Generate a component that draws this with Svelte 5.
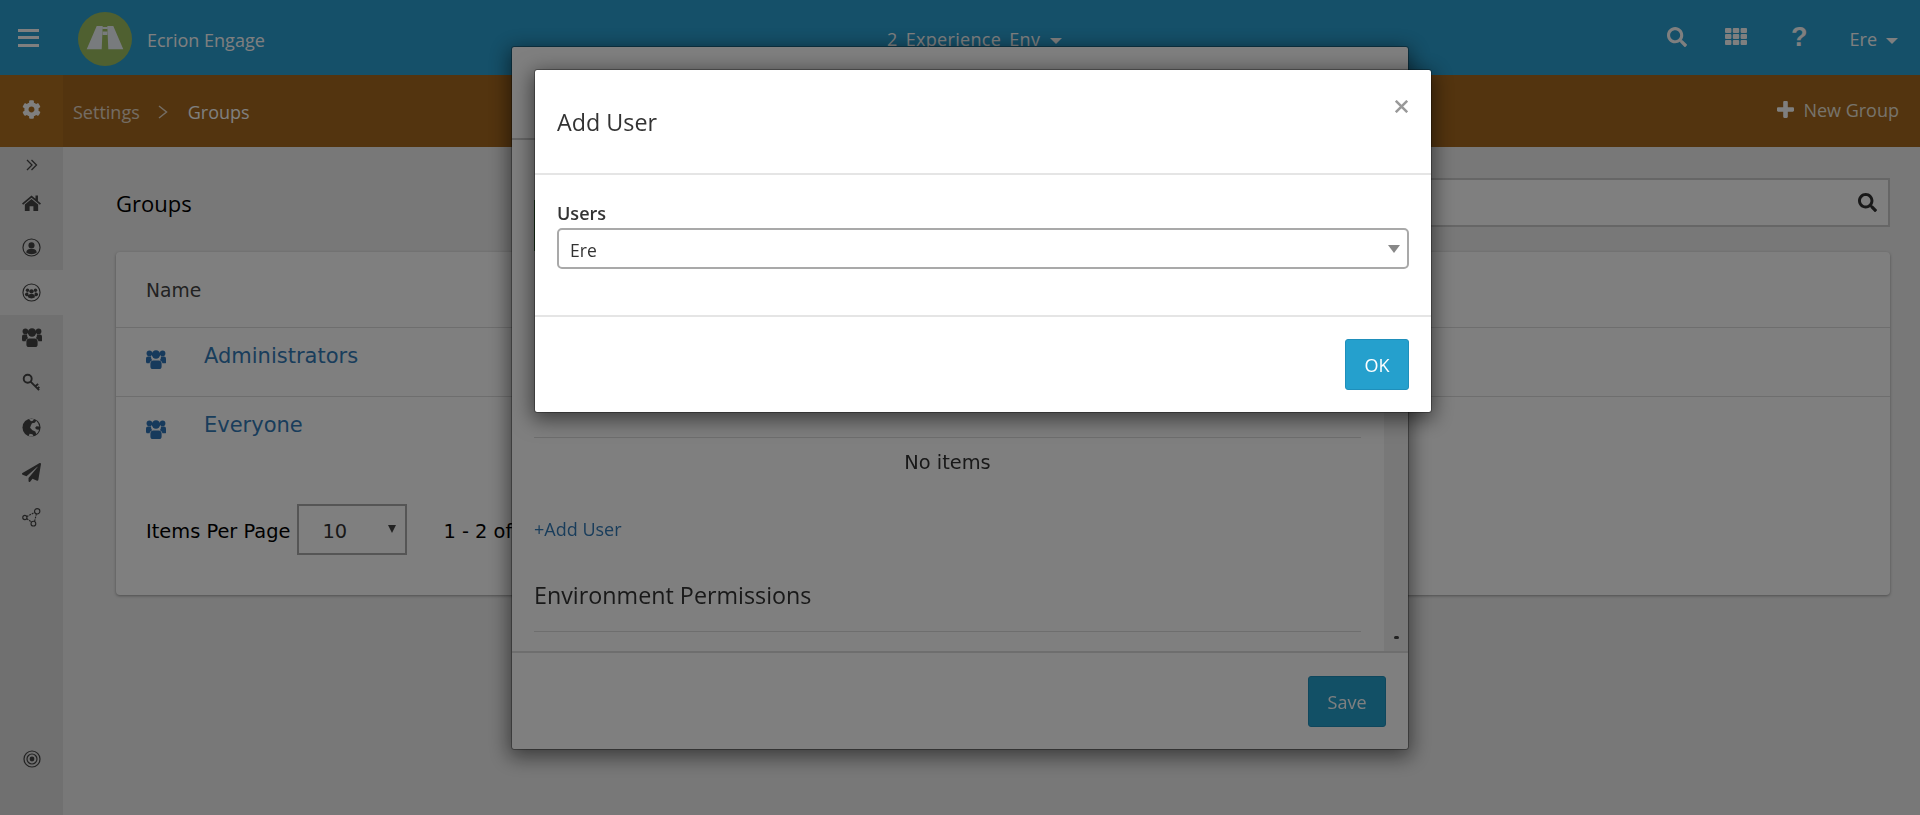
<script>
  const navIcons = ['home', 'user', 'team', 'users', 'key', 'globe', 'plane', 'share'];
  const groups = ['Administrators', 'Everyone'];
  const searchPath =
    'M505 442.7L405.3 343c-4.5-4.5-10.6-7-17-7H372c27.6-35.3 44-79.7 44-128C416 93.1 322.9 0 208 0S0 93.1 0 208s93.1 208 208 208c48.3 0 92.7-16.4 128-44v16.3c0 6.4 2.5 12.5 7 17l99.7 99.7c9.4 9.4 24.6 9.4 33.9 0l28.3-28.3c9.4-9.4 9.4-24.6.1-34zM208 336c-70.7 0-128-57.2-128-128 0-70.7 57.2-128 128-128 70.7 0 128 57.2 128 128 0 70.7-57.2 128-128 128z';
  const cogPath =
    'M487.4 315.7l-42.6-24.6c4.3-23.2 4.3-47 0-70.2l42.6-24.6c4.9-2.8 7.1-8.6 5.5-14-11.1-35.6-30-67.8-54.7-94.6-3.8-4.1-10-5.1-14.8-2.3L380.8 110c-17.9-15.4-38.5-27.3-60.8-35.1V25.8c0-5.6-3.9-10.5-9.4-11.7-36.7-8.2-74.3-7.8-109.2 0-5.5 1.2-9.4 6.1-9.4 11.7V75c-22.2 7.9-42.8 19.8-60.8 35.1L88.7 85.5c-4.9-2.8-11-1.9-14.8 2.3-24.7 26.7-43.6 58.9-54.7 94.6-1.7 5.4.6 11.2 5.5 14L67.3 221c-4.3 23.2-4.3 47 0 70.2l-42.6 24.6c-4.9 2.8-7.1 8.6-5.5 14 11.1 35.6 30 67.8 54.7 94.6 3.8 4.1 10 5.1 14.8 2.3l42.6-24.6c17.9 15.4 38.5 27.3 60.8 35.1v49.2c0 5.6 3.9 10.5 9.4 11.7 36.7 8.2 74.3 7.8 109.2 0 5.5-1.2 9.4-6.1 9.4-11.7v-49.2c22.2-7.9 42.8-19.8 60.8-35.1l42.6 24.6c4.9 2.8 11 1.9 14.8-2.3 24.7-26.7 43.6-58.9 54.7-94.6 1.5-5.5-.7-11.3-5.6-14.1zM256 336c-44.1 0-80-35.9-80-80s35.9-80 80-80 80 35.9 80 80-35.9 80-80 80z';
  const planePath =
    'M476 3.2L12.5 270.6c-18.1 10.4-15.8 35.6 2.2 43.2L121 358.4l287.3-253.2c5.5-4.9 13.3 2.6 8.6 8.3L176 407v80.5c0 23.6 28.5 32.9 42.5 15.8L282 426l124.6 52.2c14.2 6 30.4-2.9 33-18.2l72-432C515 7.8 493.3-6.8 476 3.2z';
</script>

{#snippet people()}
  <circle cx="3.400" cy="3.400" r="2.800" />
  <circle cx="16.600" cy="3.400" r="2.800" />
  <circle cx="10" cy="4.500" r="4.200" />
  <path d="M0 9c0-1.600.9-2.400 2-2.400h3.200c-.3 1.300.1 2.700 1 3.700-1.400.6-2.400 1.700-2.600 3H1.400C.5 13.300 0 12.500 0 11.400zM20 9c0-1.600-.9-2.400-2-2.400h-3.200c.3 1.300-.1 2.700-1 3.700 1.400.6 2.400 1.700 2.600 3h2.800c.9 0 1.400-.8 1.400-1.900z" />
  <path d="M4.400 13.500c0-2 1.400-3.100 3-3.100h5.200c1.600 0 3 1.100 3 3.100v3.200c0 1.400-1 2.300-2.300 2.300H6.700c-1.300 0-2.300-.9-2.300-2.300z" />
{/snippet}

<div class="page">
  <header class="topbar">
    <button class="burger" aria-label="Menu"><span></span><span></span><span></span></button>
    <svg class="logo" viewBox="0 0 54 54" aria-hidden="true">
      <circle cx="27" cy="27" r="27" fill="#9fc060" />
      <path fill="#f0f6fa" d="M8.700 37.300h15l1-23.300h-6zM29.300 14h6l10 23.300h-15zM24.700 15h4.600v2h-4.600zM24.700 19.500h4.600v3.500h-4.600z" />
    </svg>
    <span class="brand">Ecrion Engage</span>
    <div class="env">2_Experience_Env<i class="caret"></i></div>
    <div class="tools">
      <svg class="t-search" viewBox="0 0 512 512" aria-hidden="true"><path d={searchPath} /></svg>
      <svg class="t-grid" viewBox="0 0 22 17" aria-hidden="true">
        {#each [0, 1, 2] as row}
          {#each [0, 1, 2] as col}
            <rect x={col * 7.8} y={row * 6} width="6.400" height="5" rx="1" />
          {/each}
        {/each}
      </svg>
      <span class="t-help">?</span>
      <span class="t-user">Ere<i class="caret"></i></span>
    </div>
  </header>

  <div class="subbar">
    <div class="cog">
      <svg viewBox="0 0 512 512" aria-hidden="true"><path d={cogPath} /></svg>
    </div>
    <span class="crumb">Settings</span>
    <svg class="sep" viewBox="0 0 10 14" aria-hidden="true"><path d="M1 1l7.500 6-7.500 6" /></svg>
    <span class="crumb current">Groups</span>
    <div class="new">
      <svg viewBox="0 0 17 17" aria-hidden="true"><path d="M6.200 1.200c0-.6.500-1.200 1.200-1.200h2.200c.7 0 1.200.6 1.200 1.200v5h5c.6 0 1.200.5 1.200 1.200v2.200c0 .7-.6 1.200-1.200 1.200h-5v5c0 .6-.5 1.200-1.200 1.200H7.400c-.7 0-1.200-.6-1.200-1.200v-5h-5C.6 10.800 0 10.300 0 9.600V7.400c0-.7.600-1.200 1.200-1.200h5z" /></svg>
      New Group
    </div>
  </div>

  <div class="main">
    <nav class="side">
      <div class="expand">
        <svg viewBox="0 0 12 12" aria-hidden="true"><path d="M1 1l5 5-5 5M5.500 1l5 5-5 5" /></svg>
      </div>
      {#each navIcons as icon}
        <div class="item" class:active={icon === 'team'}>
          {#if icon === 'home'}
            <svg viewBox="0 0 20 18" aria-hidden="true">
              <path class="solid" d="M10 1.500L0 10l1.200 1.400L10 4l8.800 7.400L20 10l-3.200-2.700V1.500h-2.600v3.600z" />
              <path class="solid" d="M10 5.400L3 11.200V18h5v-5h4v5h5v-6.800z" />
            </svg>
          {:else if icon === 'user'}
            <svg viewBox="0 0 20 20" aria-hidden="true">
              <circle class="ring" cx="10" cy="10" r="9" />
              <circle class="solid" cx="10" cy="7.800" r="3.200" />
              <path class="solid" d="M4.500 15.300c0-2.500 2-3.800 3.500-3.800h4c1.500 0 3.500 1.300 3.500 3.800-1.400 1.100-3.400 1.700-5.500 1.700s-4.100-.6-5.500-1.700z" />
            </svg>
          {:else if icon === 'team'}
            <svg viewBox="0 0 20 20" aria-hidden="true">
              <circle class="ring" cx="10" cy="10" r="9" />
              <circle class="solid" cx="5.800" cy="7.600" r="1.800" />
              <circle class="solid" cx="14.200" cy="7.600" r="1.800" />
              <circle class="solid" cx="10" cy="8.800" r="2.300" />
              <path class="solid" d="M3 12.500c0-1.500 1-2.500 2.200-2.500h1.300l.5 4H4.500zM17 12.500c0-1.500-1-2.500-2.200-2.500h-1.300l-.5 4h2.500zM6.300 15c0-2 1.200-3.300 2.700-3.300h2c1.500 0 2.700 1.300 2.700 3.300-1 .8-2.300 1.200-3.700 1.200S7.300 15.800 6.300 15z" />
            </svg>
          {:else if icon === 'users'}
            <svg class="wide solid" viewBox="0 0 20 19" aria-hidden="true">{@render people()}</svg>
          {:else if icon === 'key'}
            <svg viewBox="0 0 20 20" aria-hidden="true">
              <circle class="ring thick" cx="6" cy="6" r="4.200" />
              <path class="ring thick" d="M9 9l9 9M14 14l3-2.500M16.400 16.400l1.800-1.800" />
            </svg>
          {:else if icon === 'globe'}
            <svg viewBox="0 0 20 20" aria-hidden="true">
              <circle class="solid" cx="10" cy="10" r="9.500" />
              <path class="cut" d="M7.500 1.200c1.500-.5 3.500-.5 5 0L11.500 3 9.500 3.400zM10.500 5.500l3-.5 1.500-2 2 2.500 1.200 3.500-3-.2-1.500 1.700 1.800 1.500 2.500.3c-.5 2-1.500 3.300-3 4.500l-1-2.500-3-1.500-2.500-2.500.8-2.300z" />
              <path class="cut" d="M8 16.500l3 .5 1 2-2.500.5-2.500-.7z" />
            </svg>
          {:else if icon === 'plane'}
            <svg viewBox="0 0 512 512" aria-hidden="true"><path class="solid" d={planePath} /></svg>
          {:else}
            <svg viewBox="0 0 20 20" aria-hidden="true">
              <circle class="ring" cx="3" cy="10" r="2.200" />
              <circle class="ring" cx="16" cy="3.500" r="2.800" />
              <circle class="ring" cx="12" cy="16.500" r="2.500" />
              <path class="ring" d="M5 9l8.500-4.500M5 11.300l5.300 3.600M13.300 13.900l1.800-7.500" stroke-dasharray="2 1" />
            </svg>
          {/if}
        </div>
      {/each}
      <div class="target">
        <svg viewBox="0 0 18 18" aria-hidden="true">
          <circle class="ring" cx="9" cy="9" r="8" />
          <circle class="ring" cx="9" cy="9" r="5" />
          <circle class="solid" cx="9" cy="9" r="2.400" />
        </svg>
      </div>
    </nav>

    <main class="content">
      <div class="headline">
        <h1>Groups</h1>
        <div class="search">
          <svg viewBox="0 0 512 512" aria-hidden="true"><path d={searchPath} /></svg>
        </div>
      </div>
      <section class="card">
        <div class="row head">Name</div>
        {#each groups as group}
          <div class="row">
            <svg class="g-icon" viewBox="0 0 20 19" aria-hidden="true">{@render people()}</svg>
            <a href="#top">{group}</a>
          </div>
        {/each}
        <div class="pager">
          <span class="nudge">Items Per Page</span>
          <div class="per">10<i></i></div>
          <span class="count nudge">1 - 2 of 2</span>
        </div>
      </section>
    </main>
  </div>

  <div class="modal behind">
    <div class="m-head"></div>
    <div class="m-body">
      <div class="m-scroll">
        <div class="status"></div>
        <div class="empty">No items</div>
        <a class="add" href="#top">+Add User</a>
        <h2>Environment Permissions</h2>
      </div>
      <div class="track"><i></i></div>
    </div>
    <div class="m-foot"><button class="btn">Save</button></div>
  </div>

  <div class="backdrop"></div>

  <div class="modal dialog">
    <div class="d-head">
      <h2>Add User</h2>
      <svg class="close" viewBox="0 0 13 13" aria-hidden="true"><path d="M.8.8l11.400 11.400M12.200.8L.8 12.200" /></svg>
    </div>
    <div class="d-body">
      <label for="users">Users</label>
      <div id="users" class="select">Ere<i></i></div>
    </div>
    <div class="d-foot"><button class="btn">OK</button></div>
  </div>
</div>

<style>
  :global(body) {
    margin: 0;
    background: #f0f0f0;
    overflow: hidden;
  }
  .page {
    height: 815px;
    display: flex;
    flex-direction: column;
    font-family: 'Open Sans', sans-serif;
    color: #333;
  }
  .topbar {
    height: 75px;
    flex: none;
    background: #2aa0d2;
    color: #fff;
    display: flex;
    align-items: center;
    position: relative;
  }
  .burger {
    width: 21px;
    height: 18px;
    margin-left: 18px;
    padding: 0;
    border: 0;
    background: none;
    display: flex;
    flex-direction: column;
    justify-content: space-between;
  }
  .burger span {
    height: 3px;
    background: #fff;
  }
  .logo {
    width: 54px;
    height: 54px;
    margin: 2px 0 0 39px;
  }
  .brand {
    font-size: 18px;
    margin: 4px 0 0 15px;
  }
  .env {
    position: absolute;
    left: 887px;
    top: 27px;
    font-size: 18px;
    line-height: 24px;
    letter-spacing: 0.3px;
  }
  .caret {
    display: inline-block;
    border: 6px solid transparent;
    border-top-color: currentColor;
    border-bottom: 0;
    margin-left: 10px;
    vertical-align: middle;
  }
  .tools {
    margin-left: auto;
    display: flex;
    align-items: center;
    fill: #fff;
  }
  .t-search {
    width: 20px;
    height: 20px;
    margin-top: -1px;
  }
  .t-grid {
    width: 22px;
    height: 17px;
    margin: -2px 0 0 38px;
  }
  .t-help {
    font-family: 'Liberation Sans', sans-serif;
    font-weight: 700;
    font-size: 27px;
    line-height: 30px;
    margin: -2px 0 0 44px;
  }
  .t-user {
    font-size: 18px;
    margin: 3px 22px 0 42px;
    white-space: nowrap;
  }
  .t-user .caret {
    margin-left: 9px;
  }
  .subbar {
    height: 72px;
    flex: none;
    background: #a6681e;
    color: #fff;
    display: flex;
    align-items: center;
    font-size: 18px;
  }
  .cog {
    width: 63px;
    height: 100%;
    background: #b07020;
    display: flex;
    align-items: center;
    justify-content: center;
    fill: #fff;
  }
  .cog svg {
    width: 19px;
    height: 19px;
    margin-top: -4px;
  }
  .crumb {
    margin: 2px 0 0 10px;
    opacity: 0.75;
  }
  .crumb.current {
    margin-left: 20px;
    opacity: 1;
  }
  .sep {
    width: 10px;
    height: 14px;
    margin: 2px 0 0 18px;
    fill: none;
    stroke: #fff;
    stroke-width: 1.500;
    opacity: 0.75;
  }
  .new {
    margin: -2px 21px 0 auto;
    display: flex;
    align-items: center;
    gap: 9px;
    color: #eee6d8;
    fill: #fff;
  }
  .new svg {
    width: 17px;
    height: 17px;
    margin-top: -1px;
  }
  .main {
    flex: 1;
    display: flex;
    min-height: 0;
  }
  .side {
    width: 63px;
    flex: none;
    background: #e0e0e0;
    display: flex;
    flex-direction: column;
    color: #444;
  }
  .expand {
    height: 33px;
    padding-top: 3px;
    box-sizing: border-box;
    display: flex;
    align-items: center;
    justify-content: center;
  }
  .expand svg {
    width: 12px;
    height: 12px;
    fill: none;
    stroke: #444;
    stroke-width: 1.300;
  }
  .item {
    height: 45px;
    display: flex;
    align-items: center;
    justify-content: center;
  }
  .item.active {
    background: #f0f0f0;
  }
  .item svg {
    width: 19px;
    height: 19px;
  }
  .item svg.wide {
    width: 20px;
  }
  .solid {
    fill: #444;
  }
  .ring {
    fill: none;
    stroke: #444;
    stroke-width: 1.200;
  }
  .ring.thick {
    stroke-width: 2;
  }
  .cut {
    fill: #e0e0e0;
  }
  .target {
    margin-top: auto;
    height: 65px;
    display: flex;
    justify-content: center;
  }
  .target svg {
    width: 18px;
    height: 18px;
  }
  .content {
    flex: 1;
    padding: 31px 30px 0 53px;
    min-width: 0;
  }
  .headline {
    display: flex;
    justify-content: space-between;
    align-items: center;
    height: 49px;
  }
  h1 {
    margin: 1px 0 0;
    font-size: 22px;
    font-weight: 400;
    color: #000;
  }
  .search {
    width: 900px;
    height: 49px;
    box-sizing: border-box;
    border: 2px solid #ccc;
    background: #fff;
    display: flex;
    align-items: center;
    justify-content: flex-end;
    padding-right: 11px;
    fill: #333;
  }
  .search svg {
    width: 19px;
    height: 19px;
  }
  .card {
    margin-top: 25px;
    height: 343px;
    box-sizing: border-box;
    background: #fff;
    border-radius: 4px;
    box-shadow: 0 1px 3px rgba(0, 0, 0, 0.35);
    font-family: 'DejaVu Sans', sans-serif;
  }
  .row {
    height: 69px;
    box-sizing: border-box;
    border-bottom: 1px solid #ddd;
    padding: 0 30px;
    display: flex;
    align-items: center;
    font-size: 18.700px;
    color: #444;
  }
  .row.head {
    height: 76px;
    padding-top: 2px;
  }
  .row:nth-child(3) {
    border-bottom: 0;
  }
  .row a {
    font-size: 21px;
    color: #337ab7;
    text-decoration: none;
    margin: -13px 0 0 38px;
  }
  .g-icon {
    width: 20px;
    height: 19px;
    fill: #2e74b8;
    flex: none;
    margin-top: -5px;
  }
  .pager {
    margin-top: 38px;
    padding-left: 30px;
    display: flex;
    align-items: center;
    font-size: 19.400px;
    color: #000;
  }
  .nudge {
    padding-top: 3px;
  }
  .per {
    width: 110px;
    height: 51px;
    box-sizing: border-box;
    margin-left: 7px;
    border: 2px solid #aaa;
    padding: 3px 0 0 23px;
    color: #333;
    display: flex;
    align-items: center;
    position: relative;
  }
  .per i {
    position: absolute;
    right: 9px;
    top: 19px;
    border: 4.500px solid transparent;
    border-top: 8px solid #444;
    border-bottom: 0;
  }
  .count {
    margin-left: 36px;
  }
  .modal {
    position: fixed;
    width: 896px;
    background: #fff;
    box-sizing: border-box;
    border-radius: 2px;
    display: flex;
    flex-direction: column;
    box-shadow: 0 5px 20px 3px rgba(0, 0, 0, 0.5);
  }
  .behind {
    left: 512px;
    top: 47px;
    height: 702px;
    outline: 1px solid rgba(0, 0, 0, 0.3);
  }
  .m-head {
    height: 93px;
    flex: none;
    border-bottom: 2px solid #ccc;
    box-sizing: border-box;
  }
  .m-body {
    flex: 1;
    display: flex;
    min-height: 0;
    border-bottom: 2px solid #ddd;
  }
  .m-scroll {
    flex: 1;
    margin: 0 23px 0 22px;
    font-family: 'DejaVu Sans', sans-serif;
    font-size: 19.400px;
  }
  .status {
    margin-top: 60px;
    height: 51px;
    width: 3px;
    background: #3d7a3d;
  }
  .empty {
    margin-top: 186px;
    border-top: 1px solid #ddd;
    height: 48px;
    display: flex;
    align-items: center;
    justify-content: center;
    color: #333;
  }
  .add {
    display: block;
    margin-top: 31px;
    line-height: 24px;
    font-family: 'Open Sans', sans-serif;
    font-size: 18px;
    color: #337ab7;
    text-decoration: none;
  }
  .m-scroll h2 {
    margin: 40px 0 0;
    height: 50px;
    font-family: 'Open Sans', sans-serif;
    font-size: 23.300px;
    line-height: 28px;
    font-weight: 400;
    color: #333;
    border-bottom: 1px solid #ddd;
  }
  .track {
    width: 24px;
    background: #f1f1f1;
    display: flex;
    align-items: flex-end;
    justify-content: center;
  }
  .track i {
    width: 5px;
    height: 3px;
    border-radius: 2px;
    background: #444;
    margin-bottom: 12px;
  }
  .m-foot,
  .d-foot {
    display: flex;
    justify-content: flex-end;
  }
  .m-foot {
    height: 96px;
    flex: none;
    padding: 23px 22px 0 0;
    box-sizing: border-box;
  }
  .btn {
    height: 51px;
    padding: 0 18.500px;
    border: 1px solid #1f8fbb;
    border-radius: 3px;
    background: #25a0cd;
    color: #fff;
    font-family: 'Open Sans', sans-serif;
    font-size: 18px;
  }
  .backdrop {
    position: fixed;
    inset: 0;
    background: rgba(0, 0, 0, 0.5);
  }
  .dialog {
    left: 535px;
    top: 70px;
    height: 342px;
    color: #333;
    outline: 1px solid rgba(0, 0, 0, 0.3);
  }
  .d-head {
    height: 105px;
    flex: none;
    box-sizing: border-box;
    border-bottom: 2px solid #e5e5e5;
    padding: 34px 22px 0;
    display: flex;
    justify-content: space-between;
  }
  .d-head h2 {
    margin: 0;
    font-size: 23.300px;
    line-height: 36px;
    font-weight: 400;
  }
  .close {
    width: 13px;
    height: 13px;
    margin: -4px 1px 0 0;
    fill: none;
    stroke: #999;
    stroke-width: 2.500;
  }
  .d-body {
    height: 142px;
    flex: none;
    box-sizing: border-box;
    border-bottom: 2px solid #e5e5e5;
    padding: 27px 22px 0;
  }
  label {
    display: block;
    font-size: 18px;
    font-weight: 600;
    line-height: 24px;
    margin-bottom: 2px;
    margin-top: -1px;
  }
  .select {
    height: 41px;
    margin-top: 3px;
    box-sizing: border-box;
    border: 2px solid #a9a9a9;
    border-radius: 5px;
    padding: 3px 0 0 11px;
    font-size: 17.500px;
    display: flex;
    align-items: center;
    position: relative;
  }
  .select i {
    position: absolute;
    right: 7px;
    top: 15px;
    border: 6px solid transparent;
    border-top: 8px solid #888;
    border-bottom: 0;
  }
  .d-foot {
    padding: 22px 22px 0 0;
  }
</style>
